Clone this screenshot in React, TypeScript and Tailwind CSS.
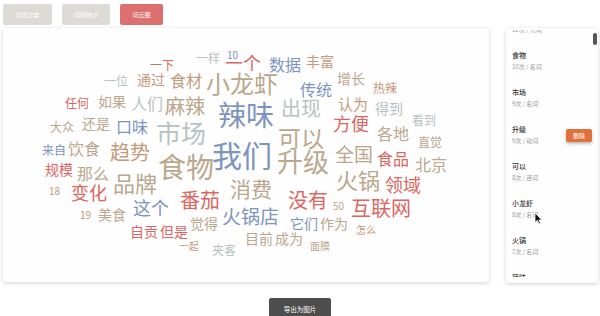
import React from "react";

const T = "#bba78c";
const B = "#c49a7c";
const U = "#7d94bf";
const G = "#b6c3c1";
const R = "#dc6661";

type W = [string, number, number, number, string];

const words: W[] = [
  ["一样", 196, 53, 12, G],
  ["10", 227, 51, 10, U],
  ["一个", 225, 55, 18, R],
  ["数据", 269, 58, 16, U],
  ["丰富", 306, 55, 14, B],
  ["一下", 150, 60, 12, R],
  ["一位", 104, 76, 12, G],
  ["通过", 137, 73, 14, B],
  ["食材", 170, 74, 16, B],
  ["小龙虾", 206, 73, 24, T],
  ["传统", 300, 83, 16, U],
  ["增长", 337, 72, 14, T],
  ["热辣", 373, 83, 12, B],
  ["任何", 65, 98, 12, R],
  ["如果", 98, 95, 14, T],
  ["人们", 131, 97, 16, G],
  ["麻辣", 165, 98, 20, T],
  ["辣味", 218, 103, 28, U],
  ["出现", 281, 100, 20, G],
  ["认为", 338, 97, 15, B],
  ["得到", 375, 102, 14, G],
  ["看到", 412, 115, 12, G],
  ["大众", 50, 122, 12, T],
  ["还是", 82, 117, 14, T],
  ["口味", 116, 120, 16, U],
  ["市场", 156, 122, 25, G],
  ["可以", 278, 128, 23, T],
  ["方便", 333, 116, 18, R],
  ["各地", 377, 127, 16, T],
  ["直觉", 418, 137, 12, T],
  ["来自", 42, 145, 12, U],
  ["饮食", 68, 142, 16, T],
  ["趋势", 110, 144, 20, B],
  ["我们", 212, 142, 30, U],
  ["全国", 335, 146, 19, T],
  ["食品", 377, 152, 16, R],
  ["北京", 415, 158, 16, T],
  ["食物", 158, 155, 28, T],
  ["升级", 277, 151, 26, T],
  ["规模", 45, 163, 14, R],
  ["那么", 77, 167, 16, T],
  ["品牌", 113, 173, 22, T],
  ["消费", 230, 180, 21, T],
  ["火锅", 336, 170, 22, T],
  ["领域", 385, 177, 18, R],
  ["18", 49, 187, 10, B],
  ["变化", 71, 185, 18, R],
  ["番茄", 180, 192, 20, R],
  ["没有", 288, 192, 20, R],
  ["50", 333, 202, 10, T],
  ["互联网", 351, 200, 20, R],
  ["这个", 133, 200, 18, U],
  ["19", 80, 211, 10, B],
  ["美食", 98, 208, 14, T],
  ["火锅店", 222, 208, 19, U],
  ["觉得", 190, 217, 14, T],
  ["它们", 290, 217, 14, U],
  ["作为", 320, 217, 14, T],
  ["自贡", 130, 225, 14, R],
  ["但是", 160, 225, 14, R],
  ["怎么", 356, 226, 10, B],
  ["一起", 179, 242, 10, B],
  ["夹客", 212, 245, 12, G],
  ["目前", 245, 232, 14, T],
  ["成为", 275, 232, 14, T],
  ["面膜", 310, 242, 10, T],
];

const items: [string, string][] = [
  ["我们", "12次 / 代词"],
  ["食物", "10次 / 名词"],
  ["市场", "9次 / 名词"],
  ["升级", "9次 / 动词"],
  ["可以", "8次 / 连词"],
  ["小龙虾", "8次 / 名词"],
  ["火锅", "7次 / 名词"],
  ["辣味", "7次 / 名词"],
];

export default function App() {
  return (
    <div className="relative w-[600px] h-[316px] overflow-hidden bg-white font-['Noto_Sans_CJK_SC','Noto_Sans',sans-serif]">
      <div className="flex gap-[10px] pl-[3px] pt-[4px]">
        <button className="w-[49px] h-[21px] rounded-[2px] bg-[#dcdbd5] text-white text-[6px] leading-none">词性分类</button>
        <button className="w-[48px] h-[21px] rounded-[2px] bg-[#dcdbd5] text-white text-[6px] leading-none">词频统计</button>
        <button className="w-[43px] h-[21px] rounded-[2px] bg-[#de6f6f] text-white text-[6px] leading-none">词云图</button>
      </div>

      <div className="flex gap-[17px] pl-[3px] mt-[3px]">
        <div className="relative w-[486px] h-[254px] rounded-[3px] bg-[#fefefe] shadow-[0_1px_4px_rgba(0,0,0,0.18)] overflow-hidden">
          {words.map(([t, x, y, s, c]) => (
            <span
              key={t}
              className="absolute whitespace-nowrap leading-none"
              style={{ left: x - 3, top: y - 28 - s * 0.1, fontSize: s, color: c }}
            >
              {t}
            </span>
          ))}
        </div>

        <div className="relative w-[92px] h-[255px] rounded-[3px] bg-[#fefefe] shadow-[0_1px_4px_rgba(0,0,0,0.18)] pt-[2px] pb-[6px]">
          <div className="h-full overflow-hidden">
            <div className="-mt-[25px]">
              {items.map(([name, sub], i) => (
                <div key={name} className="relative h-[37px] pl-[6px] flex flex-col justify-center">
                  <div className="text-[7px] leading-[10px] font-medium text-[#333]">{name}</div>
                  <div className="text-[6px] leading-[8px] mt-[3px] text-[#999]">{sub}</div>
                  {i === 3 && (
                    <div className="absolute right-[6px] top-[13px] w-[26px] h-[13px] rounded-[2px] bg-[#e0713b] text-white text-[6px] leading-[13px] text-center shadow-[0_2px_3px_rgba(0,0,0,0.25)]">
                      删除
                    </div>
                  )}
                </div>
              ))}
            </div>
          </div>
          <div className="absolute right-[1px] top-[5px] w-[4px] h-[12px] rounded-full bg-[#555]" />
        </div>
      </div>

      <div className="flex justify-center mt-[15px]">
        <button className="w-[62px] h-[22px] rounded-[2px] bg-[#4d4d4d] text-white text-[6.5px] leading-none">导出为图片</button>
      </div>

      <svg className="absolute left-[534px] top-[212px]" width="9" height="13" viewBox="0 0 9 13">
        <path d="M1 1 L1 10.5 L3.3 8.4 L5 12 L6.5 11.3 L4.9 7.9 L8 7.9 Z" fill="#111" stroke="#fff" strokeWidth="0.8" />
      </svg>
    </div>
  );
}
